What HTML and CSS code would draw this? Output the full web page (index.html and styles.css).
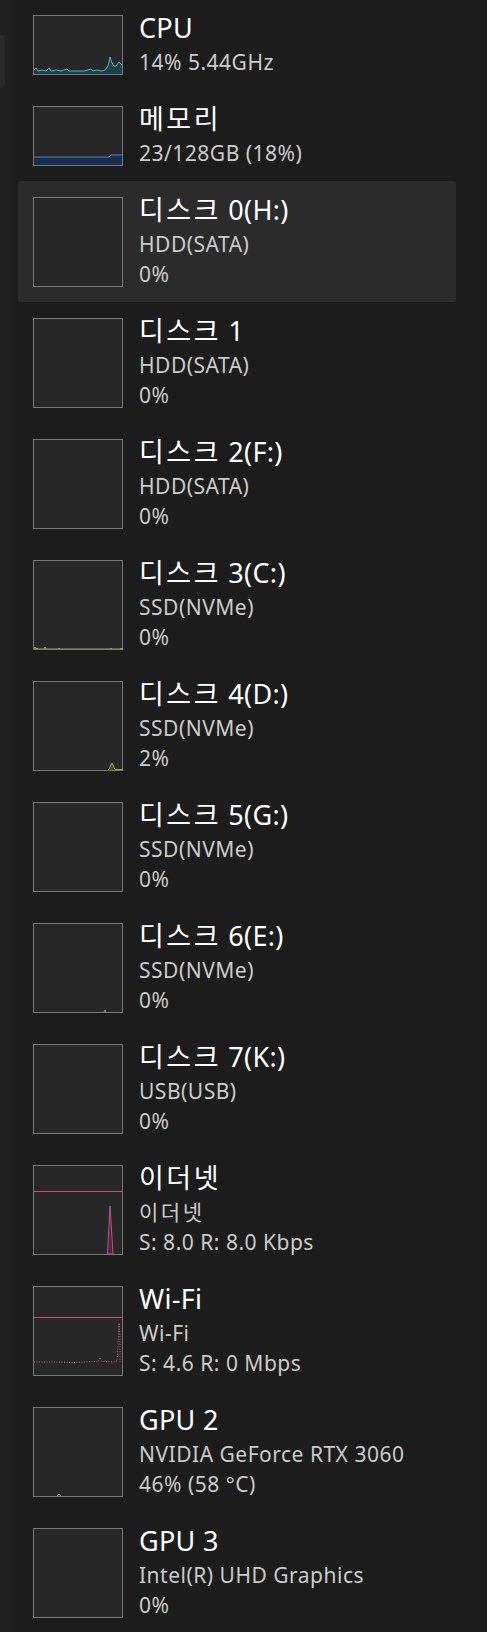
FILE: index.html
```html
<!DOCTYPE html>
<html lang="ko">

<head>
  <meta charset="UTF-8">
  <meta name="viewport" content="width=device-width, initial-scale=1.0">
  <title>성능</title>
  <link rel="stylesheet" href="styles.css">
</head>

<body>
  <div class="rail">
    <div class="rail-tab"></div>
  </div>

  <div class="perf-list">
    <div class="perf-item">
      <div class="graph">
        <svg viewBox="0 0 88 58" preserveAspectRatio="none">
          <polygon class="cpu-fill" points="0,54 2,52 4,55 8,54 12,55 15,52 17,55 22,54 27,55 30,54 33,53 35,55 40,55 45,55 50,55 54,54 57,53 59,55 63,54 67,55 71,54 74,50 76,41 78,47 80,50 82,50 85,46 88,49 88,58 0,58"/>
          <polyline class="cpu-line" points="0,54 2,52 4,55 8,54 12,55 15,52 17,55 22,54 27,55 30,54 33,53 35,55 40,55 45,55 50,55 54,54 57,53 59,55 63,54 67,55 71,54 74,50 76,41 78,47 80,50 82,50 85,46 88,49"/>
        </svg>
      </div>
      <div class="info">
        <div class="name">CPU</div>
        <div class="detail">14% 5.44GHz</div>
      </div>
    </div>

    <div class="perf-item">
      <div class="graph">
        <svg viewBox="0 0 88 58" preserveAspectRatio="none">
          <polygon class="mem-fill" points="0,50 75,50 77,48 88,48 88,58 0,58"/>
          <polyline class="mem-line" points="0,50 75,50 77,48 88,48"/>
        </svg>
      </div>
      <div class="info">
        <div class="name"><span class="ko">메모리</span></div>
        <div class="detail">23/128GB (18%)</div>
      </div>
    </div>

    <div class="perf-item selected">
      <div class="graph tall"></div>
      <div class="info">
        <div class="name"><span class="ko">디스크</span> 0(H:)</div>
        <div class="detail">HDD(SATA)</div>
        <div class="detail">0%</div>
      </div>
    </div>

    <div class="perf-item">
      <div class="graph tall"></div>
      <div class="info">
        <div class="name"><span class="ko">디스크</span> 1</div>
        <div class="detail">HDD(SATA)</div>
        <div class="detail">0%</div>
      </div>
    </div>

    <div class="perf-item">
      <div class="graph tall"></div>
      <div class="info">
        <div class="name"><span class="ko">디스크</span> 2(F:)</div>
        <div class="detail">HDD(SATA)</div>
        <div class="detail">0%</div>
      </div>
    </div>

    <div class="perf-item">
      <div class="graph tall">
        <svg viewBox="0 0 88 88" preserveAspectRatio="none">
          <polyline class="disk-line" points="0,88 1,86 2,88 3,87 4,88 10,88 11,86 12,88 24,88 25,87 26,88 76,88 77,87 78,88 86,88 87,87 88,88"/>
        </svg>
      </div>
      <div class="info">
        <div class="name"><span class="ko">디스크</span> 3(C:)</div>
        <div class="detail">SSD(NVMe)</div>
        <div class="detail">0%</div>
      </div>
    </div>

    <div class="perf-item">
      <div class="graph tall">
        <svg viewBox="0 0 88 88" preserveAspectRatio="none">
          <polygon class="disk-fill" points="75,88 78,81 81,88"/>
          <polyline class="disk-line" points="74,88 75,87 78,81 81,87.5 88,87.5"/>
        </svg>
      </div>
      <div class="info">
        <div class="name"><span class="ko">디스크</span> 4(D:)</div>
        <div class="detail">SSD(NVMe)</div>
        <div class="detail">2%</div>
      </div>
    </div>

    <div class="perf-item">
      <div class="graph tall"></div>
      <div class="info">
        <div class="name"><span class="ko">디스크</span> 5(G:)</div>
        <div class="detail">SSD(NVMe)</div>
        <div class="detail">0%</div>
      </div>
    </div>

    <div class="perf-item">
      <div class="graph tall">
        <svg viewBox="0 0 88 88" preserveAspectRatio="none">
          <polyline class="disk-line" points="70,88 71,86 72,88"/>
        </svg>
      </div>
      <div class="info">
        <div class="name"><span class="ko">디스크</span> 6(E:)</div>
        <div class="detail">SSD(NVMe)</div>
        <div class="detail">0%</div>
      </div>
    </div>

    <div class="perf-item">
      <div class="graph tall"></div>
      <div class="info">
        <div class="name"><span class="ko">디스크</span> 7(K:)</div>
        <div class="detail">USB(USB)</div>
        <div class="detail">0%</div>
      </div>
    </div>

    <div class="perf-item">
      <div class="graph tall">
        <svg viewBox="0 0 88 88" preserveAspectRatio="none">
          <line class="net-line" x1="0" y1="25.5" x2="88" y2="25.5"/>
          <polygon class="net-fill" points="73.5,88 76,40 79,88"/>
        </svg>
      </div>
      <div class="info">
        <div class="name"><span class="ko">이더넷</span></div>
        <div class="detail"><span class="ko">이더넷</span></div>
        <div class="detail">S: 8.0 R: 8.0 Kbps</div>
      </div>
    </div>

    <div class="perf-item">
      <div class="graph tall">
        <svg viewBox="0 0 88 88" preserveAspectRatio="none">
          <line class="net-line" x1="0" y1="30.5" x2="88" y2="30.5"/>
          <polyline class="net-dots" points="0,75 20,75 40,75.5 50,75 60,74.5 64,75 66,70.5 68,74.5 80,75 83,74 84,60 85,36 86,50 86,75"/>
        </svg>
      </div>
      <div class="info">
        <div class="name">Wi-Fi</div>
        <div class="detail">Wi-Fi</div>
        <div class="detail">S: 4.6 R: 0 Mbps</div>
      </div>
    </div>

    <div class="perf-item">
      <div class="graph tall">
        <svg viewBox="0 0 88 88" preserveAspectRatio="none">
          <polyline class="gpu-line" points="23,88 25,86 27,88"/>
        </svg>
      </div>
      <div class="info">
        <div class="name">GPU 2</div>
        <div class="detail">NVIDIA GeForce RTX 3060</div>
        <div class="detail">46% (58 °C)</div>
      </div>
    </div>

    <div class="perf-item">
      <div class="graph tall"></div>
      <div class="info">
        <div class="name">GPU 3</div>
        <div class="detail">Intel(R) UHD Graphics</div>
        <div class="detail">0%</div>
      </div>
    </div>
  </div>
</body>
</html>
```

FILE: styles.css
```css
* {
  box-sizing: border-box;
}

body {
  margin: 0;
  height: 1632px;
  overflow: hidden;
  display: flex;
  background: #1c1c1c;
  font-family: "Noto Sans", "Noto Sans CJK KR", sans-serif;
}

.rail {
  width: 12px;
  flex-shrink: 0;
  background: #202020;
}

.rail-tab {
  margin-top: 35px;
  width: 5px;
  height: 53px;
  background: #2a2a2a;
  border-radius: 0 4px 4px 0;
}

.perf-list {
  margin: -1px 0 0 6px;
  width: 438px;
}

.perf-item {
  display: flex;
  align-items: flex-start;
  gap: 16px;
  padding: 16px 15px 15px;
}

.perf-item.selected {
  background: #2b2b2b;
  border-radius: 2px;
}

/* graph boxes */
.graph {
  width: 90px;
  height: 60px;
  flex-shrink: 0;
  border: 1px solid #787878;
  background: #272727;
}

.graph.tall {
  height: 90px;
}

.graph svg {
  display: block;
  width: 100%;
  height: 100%;
}

.cpu-fill {
  fill: #1e4149;
}

.cpu-line {
  fill: none;
  stroke: #4cb4c8;
  stroke-width: 1;
}

.mem-fill {
  fill: #1b2c4a;
}

.mem-line {
  fill: none;
  stroke: #4f82cc;
  stroke-width: 1;
}

.disk-fill {
  fill: #3e5220;
}

.disk-line {
  fill: none;
  stroke: #8fb041;
  stroke-width: 1;
}

.net-line {
  stroke: #c24f80;
  stroke-width: 1;
}

.net-fill {
  fill: #5a1f3a;
  stroke: #d4639a;
  stroke-width: 0.8;
}

.net-dots {
  fill: none;
  stroke: #c0648c;
  stroke-width: 1;
  stroke-dasharray: 1 1.5;
}

.gpu-line {
  fill: none;
  stroke: #8a8a8a;
  stroke-width: 1;
}

/* text */
.info {
  margin: -5px 0 -10px;
  white-space: nowrap;
}

.name {
  font-size: 27px;
  line-height: 36px;
  margin-bottom: 1px;
  color: #ffffff;
  letter-spacing: 0.3px;
}

.detail {
  font-size: 21px;
  line-height: 30px;
  color: #cbcbcb;
  letter-spacing: 0.5px;
}

.ko {
  letter-spacing: 2.5px;
}
```
